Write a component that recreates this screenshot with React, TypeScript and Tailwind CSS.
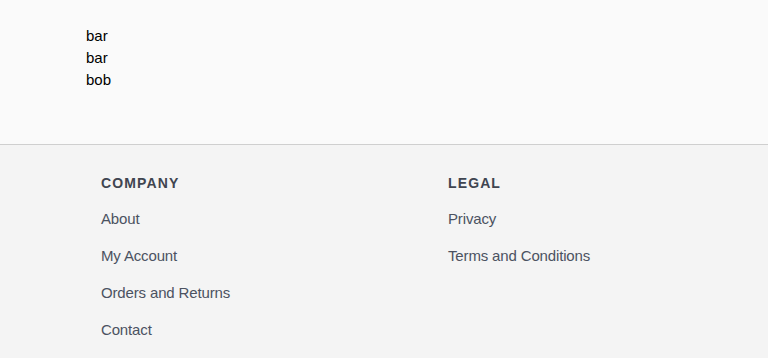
export default function App() {
  const cols = [
    { title: "COMPANY", links: ["About", "My Account", "Orders and Returns", "Contact"] },
    { title: "LEGAL", links: ["Privacy", "Terms and Conditions"] },
  ];

  return (
    <div className="min-h-[358px] bg-[#f4f4f4] font-['Liberation_Sans',Arial,sans-serif]">
      {/* main content */}
      <main className="h-[144px] bg-[#fafafa] pl-[86px] pt-[25px] text-[15px] leading-[22px] text-black">
        <div>bar</div>
        <div>bar</div>
        <div>bob</div>
      </main>

      <footer className="border-t border-[#cfcfcf] pl-[101px] pt-[28px]">
        <div className="flex">
          {cols.map((col) => (
            <div key={col.title} className="w-[347px] shrink-0">
              <h3 className="text-[14px] font-bold leading-[20px] tracking-[0.08em] text-[#3f4550]">
                {col.title}
              </h3>
              <ul className="mt-[15px] flex flex-col gap-[15px]">
                {col.links.map((l) => (
                  <li key={l} className="text-[15px] leading-[22px] tracking-[-0.01em] text-[#4b5261]">
                    {l}
                  </li>
                ))}
              </ul>
            </div>
          ))}
        </div>
      </footer>
    </div>
  );
}
